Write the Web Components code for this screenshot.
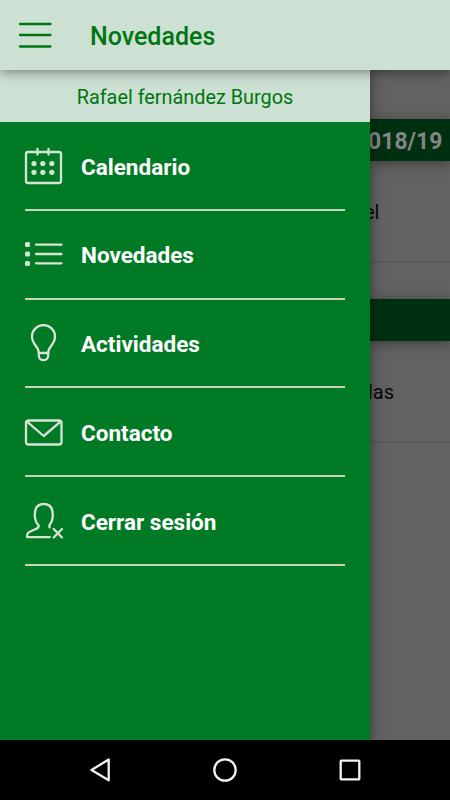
<!DOCTYPE html>
<html lang="es">
<head>
<meta charset="utf-8">
<meta name="viewport" content="width=device-width, initial-scale=1">
<title>Novedades</title>
<style>
  html, body {
    margin: 0;
    height: 100%;
    overflow: hidden;
  }

  body {
    --green: #007a25;
    --green-text: #007611;
    --mint: #cce0d3;
    font-family: Roboto, "Liberation Sans", sans-serif;
  }
</style>
</head>
<body>
<mobile-app></mobile-app>

<script>
const icons = {
  calendar: `<rect x="2" y="5" width="35" height="31" rx="2"/><path d="M13.5 2v5.5M24.5 2v5.5"/>
    <g fill="currentColor" stroke="none">
      <circle cx="10" cy="16.5" r="2.6"/><circle cx="18.8" cy="16.5" r="2.6"/><circle cx="27.8" cy="16.5" r="2.6"/>
      <circle cx="10" cy="25.3" r="2.6"/><circle cx="18.8" cy="25.3" r="2.6"/><circle cx="27.8" cy="25.3" r="2.6"/>
    </g>`,
  list: `<path d="M12 9.7h25.5M12 19h25.5M12 28.3h25.5"/>
    <g fill="currentColor" stroke="none">
      <rect x="1" y="7.1" width="5" height="5" rx="1.5"/><rect x="1" y="16.5" width="5" height="5" rx="1.5"/>
      <rect x="1" y="25.9" width="5" height="5" rx="1.5"/>
    </g>`,
  bulb: `<path d="M14.8 28.7c0-6.2-6.8-8-6.8-16.2a11.5 11.5 0 0 1 23 0c0 8.2-6.8 10-6.8 16.2"/>
    <path d="M14.8 28.7v2.8a4.7 4.7 0 0 0 9.4 0v-2.8M14.8 29h9.4"/>`,
  mail: `<rect x="2" y="7.5" width="35.5" height="24" rx="2.5"/><path d="M3 8.7L19.7 23 36.5 8.7"/>`,
  logout: `<path d="M25.7 35.2H3.2c-.8-5.4 2.8-5.6 6.5-7.2 3.5-1.4 5.4-2.2 5-4.5-2.6-2.5-3.9-6.5-3.9-10.5 0-7 3.2-11 9-11s9 4 9 11c0 4-1.200 7.500-3.300 10.100-.4 1-.2 1.500.1 2.300"/>
    <path d="M29.7 27l8.3 8.5M38 27l-8.3 8.5"/>`,
  back: `<path d="M28.7 9.5v20.800L11.500 19.900z"/>`,
  home: `<circle cx="20" cy="20" r="10.7"/>`,
  recent: `<rect x="10.7" y="10.7" width="18.6" height="18.6" rx=".5"/>`,
  menu: `<path d="M4 9h30.5M4 20h30.5M4 31.5h30.5"/>`
};

class AppIcon extends HTMLElement {
  connectedCallback() {
    this.attachShadow({mode: "open"});
    this.shadowRoot.innerHTML = `
      <style>
        :host { display: block; width: 40px; height: 40px; flex: none; }
        svg {
          display: block;
          fill: none;
          stroke: currentColor;
          stroke-width: 2.3;
          stroke-linecap: round;
          stroke-linejoin: round;
        }
      </style>
      <svg width="40" height="40" viewBox="0 0 40 40">${icons[this.getAttribute("name")]}</svg>
    `;
  }
}

class AppHeader extends HTMLElement {
  connectedCallback() {
    this.attachShadow({mode: "open"});
    this.shadowRoot.innerHTML = `
      <style>
        :host {
          display: flex;
          align-items: center;
          box-sizing: border-box;
          height: 70px;
          padding: 2px 16px 0;
          gap: 34px;
          background: var(--mint);
          color: var(--green-text);
          box-shadow: 0 1px 12px rgba(0, 0, 0, .5);
          position: relative;
          z-index: 2;
        }
        app-icon { margin-bottom: 2px; }
        h1 { margin: 0; padding-top: 1px; font-size: 25px; font-weight: 500; line-height: 31px; }
      </style>
      <app-icon name="menu"></app-icon>
      <h1><slot></slot></h1>
    `;
  }
}

class MenuItem extends HTMLElement {
  connectedCallback() {
    this.attachShadow({mode: "open"});
    this.shadowRoot.innerHTML = `
      <style>
        :host {
          display: flex;
          align-items: center;
          box-sizing: border-box;
          height: 88.8px;
          padding-top: 2.6px;
          gap: 17px;
          border-bottom: 2px solid #c5d5bd;
          color: #fff;
          font-size: 22.5px;
          font-weight: 700;
        }
        app-icon { margin-left: -1px; color: #d8e3d8; }
      </style>
      <app-icon name="${this.getAttribute("icon")}"></app-icon>
      <span><slot></slot></span>
    `;
  }
}

class SideDrawer extends HTMLElement {
  connectedCallback() {
    this.attachShadow({mode: "open"});
    this.shadowRoot.innerHTML = `
      <style>
        :host {
          display: block;
          width: 370px;
          flex: none;
          background: var(--green);
          box-shadow: 0 0 12px rgba(0, 0, 0, .5);
          position: relative;
          z-index: 1;
        }
        .user {
          height: 52px;
          line-height: 55px;
          text-align: center;
          font-size: 19.85px;
          background: var(--mint);
          color: var(--green-text);
        }
        nav { padding: 0 25px; }
      </style>
      <div class="user">${this.getAttribute("user")}</div>
      <nav><slot></slot></nav>
    `;
  }
}

class NewsSection extends HTMLElement {
  connectedCallback() {
    this.attachShadow({mode: "open"});
    this.shadowRoot.innerHTML = `
      <style>
        :host { display: block; height: 180px; color: #080808; }
        .bar {
          display: flex;
          justify-content: flex-end;
          box-sizing: border-box;
          height: 42px;
          line-height: 46px;
          padding-right: 7.5px;
          white-space: nowrap;
          font-size: 23px;
          font-weight: 700;
          color: #858585;
          background: #003010;
          box-shadow: 0 2px 12px rgba(0, 0, 0, .4);
        }
        .entry {
          box-sizing: border-box;
          height: 102px;
          line-height: 103px;
          font-size: 20px;
          border-bottom: 2px solid #5a5a5a;
        }
        .entry span { margin-left: var(--entry-shift, 0); }
      </style>
      <div class="bar"><span>${this.getAttribute("label") || ""}</span></div>
      <div class="entry"><span><slot></slot></span></div>
    `;
  }
}

class NewsFeed extends HTMLElement {
  connectedCallback() {
    this.attachShadow({mode: "open"});
    this.shadowRoot.innerHTML = `
      <style>
        :host {
          display: block;
          flex: 1;
          min-width: 0;
          padding-top: 49px;
          background: #626262;
        }
      </style>
      <slot></slot>
    `;
  }
}

class SystemBar extends HTMLElement {
  connectedCallback() {
    this.attachShadow({mode: "open"});
    this.shadowRoot.innerHTML = `
      <style>
        :host {
          display: flex;
          align-items: center;
          justify-content: center;
          gap: 85px;
          height: 60px;
          background: #000;
          color: #f2f2f2;
          position: relative;
          z-index: 2;
        }
      </style>
      <app-icon name="back"></app-icon>
      <app-icon name="home"></app-icon>
      <app-icon name="recent"></app-icon>
    `;
  }
}

class MobileApp extends HTMLElement {
  connectedCallback() {
    this.attachShadow({mode: "open"});
    this.shadowRoot.innerHTML = `
      <style>
        :host { display: flex; flex-direction: column; height: 100vh; }
        main { display: flex; flex: 1; min-height: 0; }
        /* the drawer covers the start of each entry */
        .first { --entry-shift: -6px; }
        .second { --entry-shift: -2px; }
      </style>
      <app-header>Novedades</app-header>
      <main>
        <side-drawer user="Rafael fernández Burgos">
          <menu-item icon="calendar">Calendario</menu-item>
          <menu-item icon="list">Novedades</menu-item>
          <menu-item icon="bulb">Actividades</menu-item>
          <menu-item icon="mail">Contacto</menu-item>
          <menu-item icon="logout">Cerrar sesión</menu-item>
        </side-drawer>
        <news-feed>
          <news-section class="first" label="018/19">el</news-section>
          <news-section class="second">las</news-section>
        </news-feed>
      </main>
      <system-bar></system-bar>
    `;
  }
}

customElements.define("app-icon", AppIcon);
customElements.define("app-header", AppHeader);
customElements.define("menu-item", MenuItem);
customElements.define("side-drawer", SideDrawer);
customElements.define("news-section", NewsSection);
customElements.define("news-feed", NewsFeed);
customElements.define("system-bar", SystemBar);
customElements.define("mobile-app", MobileApp);
</script>
</body>
</html>
